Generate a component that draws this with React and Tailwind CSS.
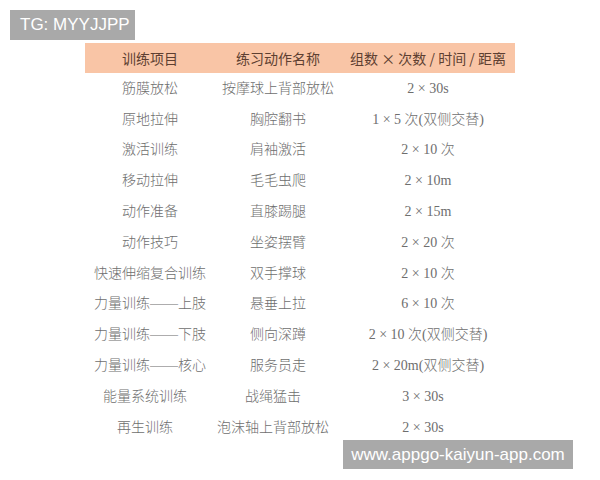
const rows = [
  ["筋膜放松", "按摩球上背部放松", "2 × 30s"],
  ["原地拉伸", "胸腔翻书", "1 × 5 次(双侧交替)"],
  ["激活训练", "肩袖激活", "2 × 10 次"],
  ["移动拉伸", "毛毛虫爬", "2 × 10m"],
  ["动作准备", "直膝踢腿", "2 × 15m"],
  ["动作技巧", "坐姿摆臂", "2 × 20 次"],
  ["快速伸缩复合训练", "双手撑球", "2 × 10 次"],
  ["力量训练——上肢", "悬垂上拉", "6 × 10 次"],
  ["力量训练——下肢", "侧向深蹲", "2 × 10 次(双侧交替)"],
  ["力量训练——核心", "服务员走", "2 × 20m(双侧交替)"],
  ["能量系统训练", "战绳猛击", "3 × 30s"],
  ["再生训练", "泡沫轴上背部放松", "2 × 30s"],
];

const serif = { fontFamily: '"Liberation Serif", "Noto Sans CJK SC", serif' };

export default function App() {
  return (
    <div className="relative w-[600px] h-[480px] bg-white overflow-hidden">
      {/* watermark top */}
      <div
        className="absolute left-[10px] top-[10px] w-[125px] h-[30px] bg-[#a9a9a9] text-white text-[17px] leading-[30px] pl-[10px] whitespace-nowrap"
        style={{ fontFamily: '"Liberation Sans", sans-serif' }}
      >
        TG: MYYJJPP
      </div>

      <div className="pt-[43px] pl-[85px]">
        <div className="w-[430px]">
          <div
            className="flex h-[30px] items-center bg-[#f9c5a6] text-[#5e3f31] text-[14px]"
            style={{ fontFamily: '"Noto Sans CJK SC", sans-serif' }}
          >
            <div className="w-[130px] text-center">训练项目</div>
            <div className="w-[126px] text-center">练习动作名称</div>
            <div className="w-[174px] text-center whitespace-nowrap">组数 × 次数 / 时间 / 距离</div>
          </div>
          {rows.map((r, i) => (
            <div
              key={i}
              className={`flex h-[30.8px] items-center text-[#6e6e6e] text-[14px] font-light ${i >= 10 ? "-translate-x-[5px]" : ""}`}
              style={serif}
            >
              <div className="w-[130px] text-center whitespace-nowrap">{r[0]}</div>
              <div className="w-[126px] text-center whitespace-nowrap">{r[1]}</div>
              <div className="w-[174px] text-center whitespace-nowrap">{r[2]}</div>
            </div>
          ))}
        </div>
      </div>

      {/* watermark bottom */}
      <div
        className="absolute left-[343px] top-[440px] w-[230px] h-[29px] bg-[#a9a9a9] text-white text-[17px] leading-[29px] text-center whitespace-nowrap"
        style={{ fontFamily: '"Liberation Sans", sans-serif' }}
      >
        www.appgo-kaiyun-app.com
      </div>
    </div>
  );
}
